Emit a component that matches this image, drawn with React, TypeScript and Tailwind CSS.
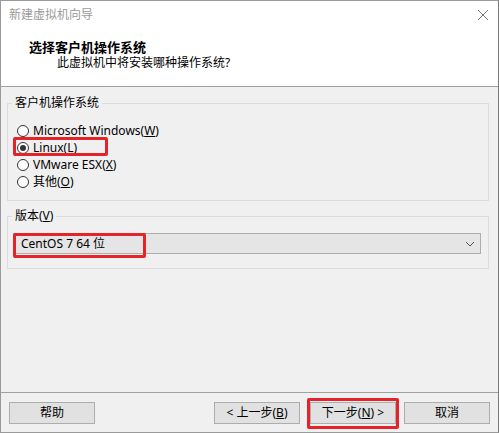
import React from 'react';

const font = { fontFamily: '"Noto Sans", "Noto Sans CJK SC", sans-serif' };

const Radio: React.FC<{ checked?: boolean; children: React.ReactNode; boxed?: boolean }> = ({ checked, children, boxed }) => (
  <div className="relative flex items-center h-[17px] pl-[9px]">
    {boxed && <div className="absolute left-[5px] top-[-2px] w-[95px] h-[19px] border-[3px] border-[#e3242b] rounded-[2px]" />}
    <span className="w-[12px] h-[12px] rounded-full border border-[#333] bg-white flex items-center justify-center">
      {checked && <span className="w-[6px] h-[6px] rounded-full bg-[#333]" />}
    </span>
    <span className="ml-[4px] text-[12px] leading-[16px] text-black">{children}</span>
  </div>
);

const Btn: React.FC<{ children: React.ReactNode; className?: string; boxed?: boolean }> = ({ children, className, boxed }) => (
  <div className={`relative w-[86px] h-[22px] bg-[#e1e1e1] border border-[#adadad] flex items-center justify-center text-[12px] leading-[16px] text-black ${className ?? ''}`}>
    {boxed && <div className="absolute left-[-4px] top-[-5px] w-[92px] h-[31px] border-[3px] border-[#e3242b] rounded-[2px]" />}
    {children}
  </div>
);

export default function App() {
  return (
    <div style={font} className="w-[499px] h-[433px] bg-[#f0f0f0] border border-[#9a9a9a] border-r-[#7a7a7a] flex flex-col">
      {/* Header */}
      <div className="h-[86px] bg-white border-b border-[#a0a0a0] flex flex-col">
        <div className="h-[28px] flex items-center justify-between pl-[8px] pr-[8px]">
          <span className="text-[12px] leading-[16px] text-[#9a9a9a]">新建虚拟机向导</span>
          <svg width="12" height="12" viewBox="0 0 12 12" className="mr-[1px]">
            <path d="M1 1 L11 11 M11 1 L1 11" stroke="#777" strokeWidth="1" fill="none" />
          </svg>
        </div>
        <div className="pl-[28px] mt-[10px] text-[13px] leading-[16px] font-bold text-black">选择客户机操作系统</div>
        <div className="pl-[56px] mt-[0px] text-[12px] leading-[16px] text-black">此虚拟机中将安装哪种操作系统?</div>
      </div>

      {/* Body */}
      <div className="flex-1 px-[6px] pt-[8px] flex flex-col">
        <fieldset className="h-[106px] w-[482px] border border-[#dcdcdc]">
          <legend className="ml-[4px] px-[3px] text-[12px] leading-[16px] text-black">客户机操作系统</legend>
          <div className="pt-[11px] flex flex-col">
            <Radio>Microsoft Windows(<u>W</u>)</Radio>
            <Radio checked boxed>Linux(<u>L</u>)</Radio>
            <Radio>VMware ESX(<u>X</u>)</Radio>
            <Radio>其他(<u>O</u>)</Radio>
          </div>
        </fieldset>

        <fieldset className="mt-[7px] h-[61px] w-[482px] border border-[#dcdcdc]">
          <legend className="ml-[4px] px-[3px] text-[12px] leading-[16px] text-black">版本(<u>V</u>)</legend>
          <div className="relative ml-[5px] mt-[9px] w-[468px] h-[21px] bg-[#e5e5e5] border border-[#adadad] flex items-center justify-between pl-[7px] pr-[5px]">
            <div className="absolute left-[-1px] top-[-1px] w-[133px] h-[25px] border-[3px] border-[#e3242b] rounded-[2px]" />
            <span className="text-[12px] leading-[16px] text-black">CentOS 7 64 位</span>
            <svg width="10" height="6" viewBox="0 0 10 6">
              <path d="M1 1 L5 5 L9 1" stroke="#555" strokeWidth="1" fill="none" />
            </svg>
          </div>
        </fieldset>
      </div>

      {/* Footer */}
      <div className="h-[40px] border-t border-[#a0a0a0] flex items-start pt-[9px] pl-[8px] pr-[8px]">
        <Btn>帮助</Btn>
        <Btn className="ml-auto">&lt; 上一步(<u>B</u>)</Btn>
        <Btn className="ml-[10px]" boxed>下一步(<u>N</u>) &gt;</Btn>
        <Btn className="ml-[8px]">取消</Btn>
      </div>
    </div>
  );
}
